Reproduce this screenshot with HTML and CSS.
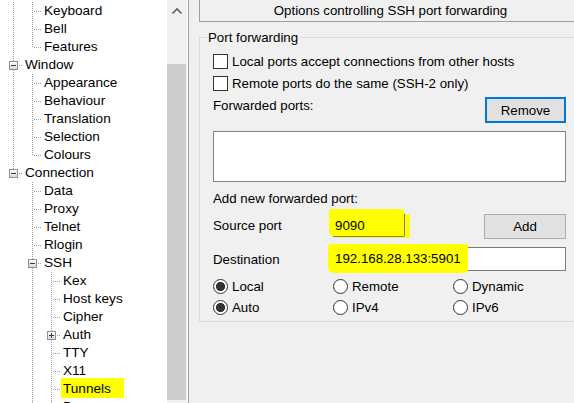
FILE: index.html
```html
<!DOCTYPE html>
<html>
<head>
<meta charset="utf-8">
<link rel="stylesheet" href="styles.css">
</head>
<body>
<div class="app">
  <div class="tree-pane">
    <div class="tree">
      <div class="row"><span class="g v"></span><span class="c mid"></span><span class="lbl">Keyboard</span></div>
      <div class="row"><span class="g v"></span><span class="c mid"></span><span class="lbl">Bell</span></div>
      <div class="row"><span class="g v"></span><span class="c last"></span><span class="lbl">Features</span></div>
      <div class="row"><span class="c mid"><span class="box minus"></span></span><span class="lbl">Window</span></div>
      <div class="row"><span class="g v"></span><span class="c mid"></span><span class="lbl">Appearance</span></div>
      <div class="row"><span class="g v"></span><span class="c mid"></span><span class="lbl">Behaviour</span></div>
      <div class="row"><span class="g v"></span><span class="c mid"></span><span class="lbl">Translation</span></div>
      <div class="row"><span class="g v"></span><span class="c mid"></span><span class="lbl">Selection</span></div>
      <div class="row"><span class="g v"></span><span class="c last"></span><span class="lbl">Colours</span></div>
      <div class="row"><span class="c last"><span class="box minus"></span></span><span class="lbl">Connection</span></div>
      <div class="row"><span class="g"></span><span class="c mid"></span><span class="lbl">Data</span></div>
      <div class="row"><span class="g"></span><span class="c mid"></span><span class="lbl">Proxy</span></div>
      <div class="row"><span class="g"></span><span class="c mid"></span><span class="lbl">Telnet</span></div>
      <div class="row"><span class="g"></span><span class="c mid"></span><span class="lbl">Rlogin</span></div>
      <div class="row"><span class="g"></span><span class="c mid"><span class="box minus"></span></span><span class="lbl">SSH</span></div>
      <div class="row"><span class="g"></span><span class="g v"></span><span class="c mid"></span><span class="lbl">Kex</span></div>
      <div class="row"><span class="g"></span><span class="g v"></span><span class="c mid"></span><span class="lbl">Host keys</span></div>
      <div class="row"><span class="g"></span><span class="g v"></span><span class="c mid"></span><span class="lbl">Cipher</span></div>
      <div class="row"><span class="g"></span><span class="g v"></span><span class="c mid"><span class="box plus"></span></span><span class="lbl">Auth</span></div>
      <div class="row"><span class="g"></span><span class="g v"></span><span class="c mid"></span><span class="lbl">TTY</span></div>
      <div class="row"><span class="g"></span><span class="g v"></span><span class="c mid"></span><span class="lbl">X11</span></div>
      <div class="row"><span class="g"></span><span class="g v"></span><span class="c mid"></span><span class="lbl hl">Tunnels</span></div>
      <div class="row"><span class="g"></span><span class="g v"></span><span class="c mid"></span><span class="lbl">Bugs</span></div>
    </div>
    <div class="scrollbar">
      <div class="sb-arrow">
        <svg width="20" height="24" viewBox="0 0 20 24"><path d="M5.5 13.5 L10 9 L14.5 13.5" fill="none" stroke="#606060" stroke-width="1.6"/></svg>
      </div>
      <div class="sb-thumb"></div>
    </div>
  </div>

  <div class="panel">
    <div class="header">Options controlling SSH port forwarding</div>
    <div class="group">
      <div class="group-title">Port forwarding</div>
      <div class="content">
        <div class="check-row"><span class="checkbox"></span><span>Local ports accept connections from other hosts</span></div>
        <div class="check-row"><span class="checkbox"></span><span>Remote ports do the same (SSH-2 only)</span></div>
        <div class="fwd-row">
          <span class="fwd-label">Forwarded ports:</span>
          <div class="btn btn-focus">Remove</div>
        </div>
        <div class="listbox"></div>
        <div class="add-label">Add new forwarded port:</div>
        <div class="field-row">
          <span class="field-label">Source port</span>
          <div class="field field-src">9090</div>
          <div class="btn btn-add">Add</div>
        </div>
        <div class="field-row">
          <span class="field-label">Destination</span>
          <div class="field field-dst"><span class="marker">192.168.28.133:5901</span></div>
        </div>
        <div class="radios">
          <div class="radio-item"><span class="radio on"></span><span>Local</span></div>
          <div class="radio-item"><span class="radio"></span><span>Remote</span></div>
          <div class="radio-item"><span class="radio"></span><span>Dynamic</span></div>
          <div class="radio-item"><span class="radio on"></span><span>Auto</span></div>
          <div class="radio-item"><span class="radio"></span><span>IPv4</span></div>
          <div class="radio-item"><span class="radio"></span><span>IPv6</span></div>
        </div>
      </div>
    </div>
  </div>
</div>
</body>
</html>
```

FILE: styles.css
```css
html, body {
  margin: 0;
  padding: 0;
}
body {
  width: 574px;
  height: 403px;
  overflow: hidden;
  background: #f0f0f0;
  font-family: "Liberation Sans", Arial, sans-serif;
  font-size: 13.3px;
  color: #000;
}
.app {
  display: flex;
  height: 403px;
}

/* ---------- tree pane ---------- */
.tree-pane {
  display: flex;
  width: 188px;
  flex: none;
  background: #fff;
  border-right: 1px solid #a0a0a0;
  height: 403px;
  overflow: hidden;
}
.tree {
  width: 163px;
  padding: 2px 0 0 4px;
  overflow: hidden;
  font-size: 13.6px;
}
.row {
  display: flex;
  height: 18px;
  line-height: 18px;
  white-space: nowrap;
}
.g, .c {
  display: block;
  width: 19px;
  height: 18px;
  flex: none;
}
.g.v {
  background: repeating-linear-gradient(to bottom, #a0a0a0 0 1px, transparent 1px 2px) 9px 0 / 1px 100% no-repeat;
}
.c.mid {
  background:
    repeating-linear-gradient(to right, #a0a0a0 0 1px, transparent 1px 2px) 11px 9px / 8px 1px no-repeat,
    repeating-linear-gradient(to bottom, #a0a0a0 0 1px, transparent 1px 2px) 9px 0 / 1px 100% no-repeat;
}
.c.last {
  background:
    repeating-linear-gradient(to right, #a0a0a0 0 1px, transparent 1px 2px) 11px 9px / 8px 1px no-repeat,
    repeating-linear-gradient(to bottom, #a0a0a0 0 1px, transparent 1px 2px) 9px 0 / 1px 10px no-repeat;
}
.box {
  display: block;
  width: 7px;
  height: 7px;
  margin: 5px 0 0 5px;
  border: 1px solid #919191;
}
.box.minus {
  background:
    linear-gradient(#2b3a5e, #2b3a5e) 50% 50% / 5px 1px no-repeat,
    linear-gradient(#fdfdfd, #dadada);
}
.box.plus {
  background:
    linear-gradient(#2b3a5e, #2b3a5e) 50% 50% / 5px 1px no-repeat,
    linear-gradient(#2b3a5e, #2b3a5e) 50% 50% / 1px 5px no-repeat,
    linear-gradient(#fdfdfd, #dadada);
}
.lbl {
  padding: 0 2px;
}
.lbl.hl {
  background: #ffff00;
  padding: 2px 13px 0 2px;
  margin-top: -2px;
  height: 18px;
}

.scrollbar {
  width: 20px;
  flex: none;
  background: #f0f0f0;
  display: flex;
  flex-direction: column;
}
.sb-arrow {
  height: 24px;
}
.sb-arrow svg {
  display: block;
}
.sb-thumb {
  margin-top: 40px;
  margin-right: 1px;
  height: 336px;
  background: #cdcdcd;
}

/* ---------- right panel ---------- */
.panel {
  flex: 1;
  overflow: hidden;
  padding-left: 10px;
}
.header {
  width: 381px;
  height: 21px;
  line-height: 21px;
  text-align: center;
  border-left: 1px solid #a0a0a0;
  border-bottom: 1px solid #a0a0a0;
  white-space: nowrap;
}
.group {
  margin-top: 15px;
  width: 420px;
  border: 1px solid #dcdcdc;
  padding: 0 0 3px 13px;
}
.group-title {
  width: fit-content;
  margin: -8px 0 0 -6px;
  padding: 0 1px;
  line-height: 15px;
  background: #f0f0f0;
}
.content {
  width: 353px;
  padding-top: 5px;
}
.check-row {
  display: flex;
  align-items: center;
  height: 22px;
  gap: 4px;
}
.checkbox {
  width: 13px;
  height: 13px;
  border: 1px solid #333;
  background: #fff;
}
.fwd-row {
  display: flex;
  justify-content: space-between;
  align-items: flex-start;
  margin-top: 3px;
  height: 26px;
}
.fwd-label {
  line-height: 18px;
}
.btn {
  box-sizing: border-box;
  background: #e1e1e1;
  display: flex;
  align-items: center;
  justify-content: center;
}
.btn-focus {
  width: 81px;
  height: 26px;
  border: 2px solid #0078d7;
}
.btn-add {
  width: 82px;
  height: 25px;
  border: 1px solid #adadad;
  margin-left: auto;
  margin-top: 2px;
}
.listbox {
  box-sizing: border-box;
  margin-top: 8px;
  height: 51px;
  background: #fff;
  border: 1px solid #828282;
}
.add-label {
  margin-top: 8px;
  line-height: 18px;
}
.field-row {
  display: flex;
  align-items: center;
  height: 26px;
  margin-top: 4px;
}
.field-row + .field-row {
  margin-top: 8px;
}
.field-label {
  width: 119px;
  flex: none;
}
.field {
  box-sizing: border-box;
  height: 24px;
  border: 1px solid #7a7a7a;
  background: #fff;
  display: flex;
  align-items: center;
  padding-left: 2px;
}
.field-src {
  width: 73px;
  background: #ffff00;
  box-shadow: -2px -3px 0 1px #ffff00, 5px 1px 0 0 #ffff00;
  border-left-color: #ffff00;
  border-top-color: #ffff00;
  border-radius: 2px;
}
.field-dst {
  flex: 1;
  padding-left: 0;
}
.marker {
  background: #ffff00;
  align-self: stretch;
  display: flex;
  align-items: center;
  margin: -4px 0 -3px -5px;
  padding: 0 0 0 7px;
  width: 133px;
  border-radius: 4px 2px 4px 6px;
}
.radios {
  display: grid;
  grid-template-columns: 120px 120px 113px;
  grid-auto-rows: 21px;
  margin-top: 4px;
}
.radio-item {
  display: flex;
  align-items: center;
  gap: 4px;
}
.radio {
  box-sizing: border-box;
  width: 15px;
  height: 15px;
  border: 1px solid #333;
  border-radius: 50%;
  background: #fff;
}
.radio.on {
  background: radial-gradient(circle, #333 0 4.3px, #fff 4.8px);
}
```
